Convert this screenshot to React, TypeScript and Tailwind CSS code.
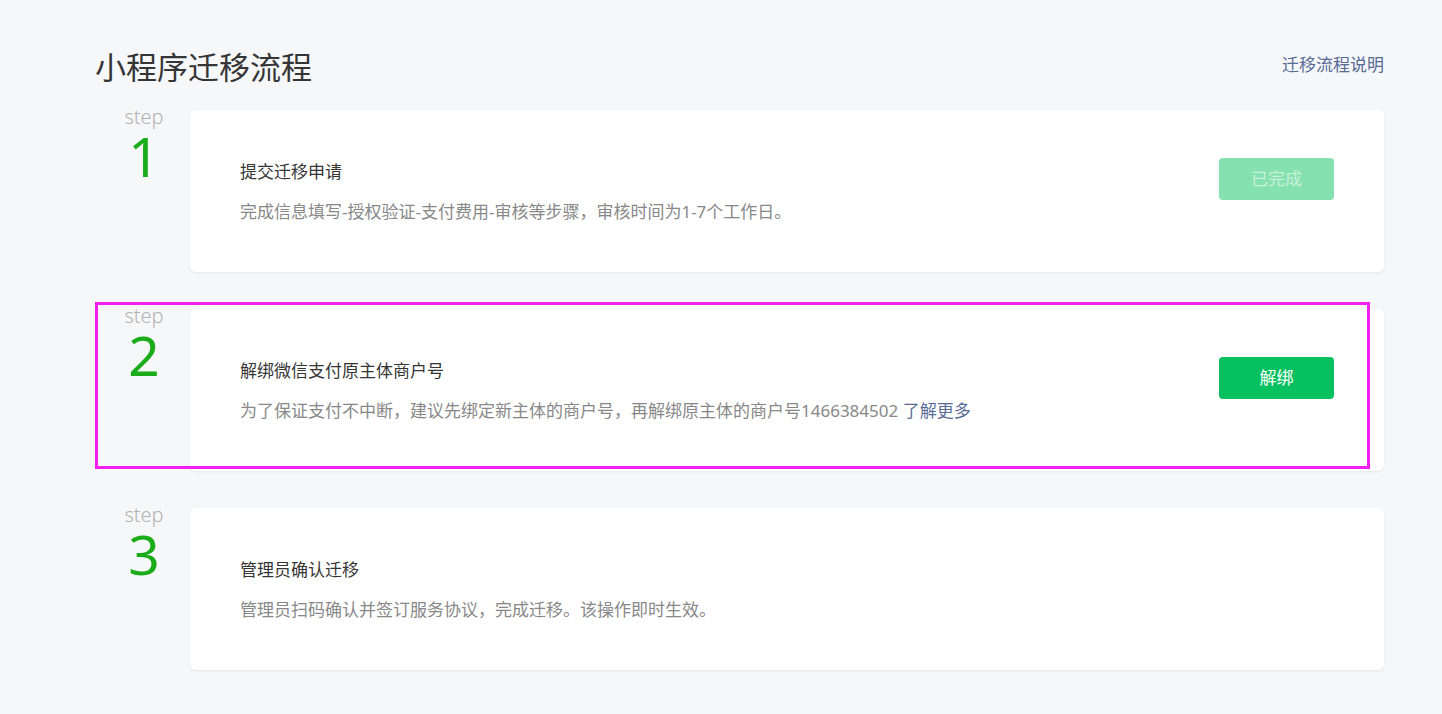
import { FC, ReactNode } from "react";

type Step = {
  no: number;
  title: string;
  desc: ReactNode;
  action?: "done" | "unbind";
  highlight?: boolean;
};

const steps: Step[] = [
  {
    no: 1,
    title: "提交迁移申请",
    desc: "完成信息填写-授权验证-支付费用-审核等步骤，审核时间为1-7个工作日。",
    action: "done",
  },
  {
    no: 2,
    title: "解绑微信支付原主体商户号",
    desc: (
      <>
        为了保证支付不中断，建议先绑定新主体的商户号，再解绑原主体的商户号1466384502{" "}
        <a className="cursor-pointer text-[#576b95]">了解更多</a>
      </>
    ),
    action: "unbind",
    highlight: true,
  },
  {
    no: 3,
    title: "管理员确认迁移",
    desc: "管理员扫码确认并签订服务协议，完成迁移。该操作即时生效。",
  },
];

const StepRow: FC<{ step: Step }> = ({ step }) => {
  return (
    <div className="relative flex">
      {step.highlight && (
        <div className="pointer-events-none absolute left-0 top-[-7px] h-[167px] w-[1275px] border-[3px] border-[#f21ff0]" />
      )}
      <div className="-mt-[4px] flex w-[95px] shrink-0 flex-col items-center pl-[3px] font-['Noto_Sans',sans-serif]">
        <span className="text-[20px] font-light leading-[22px] text-[#b2b2b2]">step</span>
        <span className="mt-[2px] text-[55px] font-normal leading-[52px] text-[#1aad19]">{step.no}</span>
      </div>
      <div className="flex h-[162px] flex-1 items-start justify-between rounded-[6px] bg-white px-[50px] pt-[48px] shadow-[0_1px_3px_rgba(0,0,0,0.07)]">
        <div>
          <p className="text-[17px] leading-[28px] text-[#353535]">{step.title}</p>
          <p className="mt-[13px] text-[17px] leading-[26px] text-[#888888]">{step.desc}</p>
        </div>
        {step.action === "done" && (
          <button className="h-[42px] w-[115px] rounded-[4px] bg-[#86e1b0] text-[17px] text-[#c7f1da]">
            已完成
          </button>
        )}
        {step.action === "unbind" && (
          <button className="h-[42px] w-[115px] rounded-[4px] bg-[#07c160] text-[17px] text-white">
            解绑
          </button>
        )}
      </div>
    </div>
  );
};

export default function App() {
  return (
    <div className="min-h-[714px] w-full bg-[#f6f7f9] font-['Noto_Sans','Noto_Sans_CJK_SC',sans-serif]">
      <div className="ml-[95px] w-[1289px] pt-[45px]">
        <div className="flex items-center justify-between">
          <h1 className="text-[31px] font-normal leading-[44px] text-[#353535]">小程序迁移流程</h1>
          <a className="-mt-[4px] cursor-pointer text-[17px] text-[#576b95]">迁移流程说明</a>
        </div>
        <div className="mt-[21px] flex flex-col gap-[37px] pb-[43px]">
          {steps.map((s) => (
            <StepRow key={s.no} step={s} />
          ))}
        </div>
      </div>
    </div>
  );
}
